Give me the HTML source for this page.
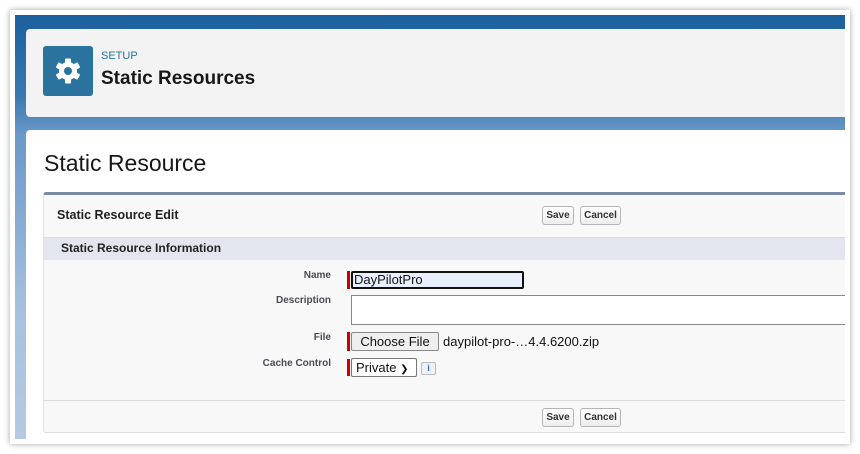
<!DOCTYPE html>
<html><head><style>
*{box-sizing:border-box;margin:0;padding:0}
body{width:860px;height:454px;background:#fff;position:relative;overflow:hidden;font-family:"Liberation Sans",Arial,sans-serif}
.frame{position:absolute;left:10px;top:10px;width:840px;height:434px;background:#fff;box-shadow:0 0 6px rgba(0,0,0,.35)}
.bg{position:absolute;left:15px;top:15px;width:830px;height:424px;background:linear-gradient(#1b5f9e 0px,#3a78b0 80px,#6a98c8 120px,#a9c1de 300px,#b4c9e2 424px)}
.hdr{position:absolute;left:26px;top:29px;width:819px;height:88px;background:#f3f3f3;border-radius:4px 0 0 4px}
.icon{position:absolute;left:43px;top:46px;width:50px;height:50px;background:#2a739e;border-radius:3px}
.setup{position:absolute;left:101px;top:50px;font-size:11px;color:#2a739e}
.title{position:absolute;left:101px;top:68px;font-size:19px;font-weight:bold;color:#181818}
.card{position:absolute;left:26px;top:130px;width:819px;height:309px;background:#fff;border-radius:4px 0 0 0}
.h1{position:absolute;left:44px;top:150px;font-size:23px;color:#181818}
.box{position:absolute;left:43px;top:192px;width:802px;height:241px;background:#f8f8f8;border-top:3px solid #7b8aa3;border-bottom:1px solid #ddd;border-left:1px solid #e4e4e4;border-radius:3px 0 0 3px}
.t{position:absolute;font-size:12.5px;font-weight:bold;color:#222}
.btn{position:absolute;height:19px;border:1px solid #b5b5b5;border-radius:3px;background:linear-gradient(#fff,#ededed);font-size:10px;font-weight:bold;color:#333;text-align:center;line-height:17px}
.band{position:absolute;left:44px;top:237px;width:801px;height:23px;background:#e3e6ef;border-top:1px solid #dcdcdc}
.lab{position:absolute;width:331px;left:0;text-align:right;font-size:10px;font-weight:bold;color:#4a4a56}
.req{position:absolute;left:347px;width:3px;background:#c00}
.inp{position:absolute;background:#fff;border:1px solid #777;font-size:13px;color:#111}
.line{position:absolute;left:44px;width:801px;height:1px;background:#dcdcdc}
</style></head><body>
<div class="frame"></div>
<div class="bg"></div>
<div class="hdr"></div>
<div class="icon"><svg width="50" height="50" viewBox="0 0 50 50"><g transform="translate(25,25)" fill="#fff"><circle r="9"/><g id="t"><rect x="-3" y="-12.5" width="6" height="6" rx="1"/></g><use href="#t" transform="rotate(60)"/><use href="#t" transform="rotate(120)"/><use href="#t" transform="rotate(180)"/><use href="#t" transform="rotate(240)"/><use href="#t" transform="rotate(300)"/><circle r="4" fill="#2a739e"/></g></svg></div>
<div class="setup">SETUP</div>
<div class="title">Static Resources</div>
<div class="card"></div>
<div class="h1">Static Resource</div>
<div class="box"></div>
<div class="t" style="left:57px;top:208px">Static Resource Edit</div>
<div class="btn" style="left:542px;top:206px;width:32px">Save</div>
<div class="btn" style="left:580px;top:206px;width:41px">Cancel</div>
<div class="band"></div>
<div class="t" style="left:61px;top:241px;font-size:12px">Static Resource Information</div>
<div class="lab" style="top:270px">Name</div>
<div class="lab" style="top:295px">Description</div>
<div class="lab" style="top:332px">File</div>
<div class="lab" style="top:358px">Cache Control</div>
<div class="req" style="top:271px;height:18px"></div>
<div class="inp" style="left:351px;top:271px;width:173px;height:18px;background:#e8f0fe;border:2px solid #111;border-radius:2px;line-height:14px;padding-left:1px">DayPilotPro</div>
<div class="inp" style="left:351px;top:295px;width:494px;height:30px;border-color:#888;border-right:none"></div>
<div class="req" style="top:332px;height:19px"></div>
<div class="inp" style="left:351px;top:332px;width:88px;height:19px;background:#efefef;border-color:#888;border-radius:2px;text-align:center;line-height:17px">Choose File</div>
<div style="position:absolute;left:443px;top:334px;font-size:13px;color:#111">daypilot-pro-…4.4.6200.zip</div>
<div class="req" style="top:359px;height:17px"></div>
<div class="inp" style="left:351px;top:358px;width:66px;height:19px;border-radius:2px;line-height:17px;padding-left:4px">Private <span style="font-size:10px">&#10095;</span></div>
<div class="inp" style="left:421px;top:362px;width:15px;height:13px;border:1px solid #bbb;border-radius:2px;background:#eef2f6;color:#2a6ac0;font-size:9px;font-weight:bold;text-align:center;line-height:11px">i</div>
<div class="line" style="top:400px"></div>
<div class="btn" style="left:542px;top:408px;width:32px">Save</div>
<div class="btn" style="left:580px;top:408px;width:41px">Cancel</div>
</body></html>
